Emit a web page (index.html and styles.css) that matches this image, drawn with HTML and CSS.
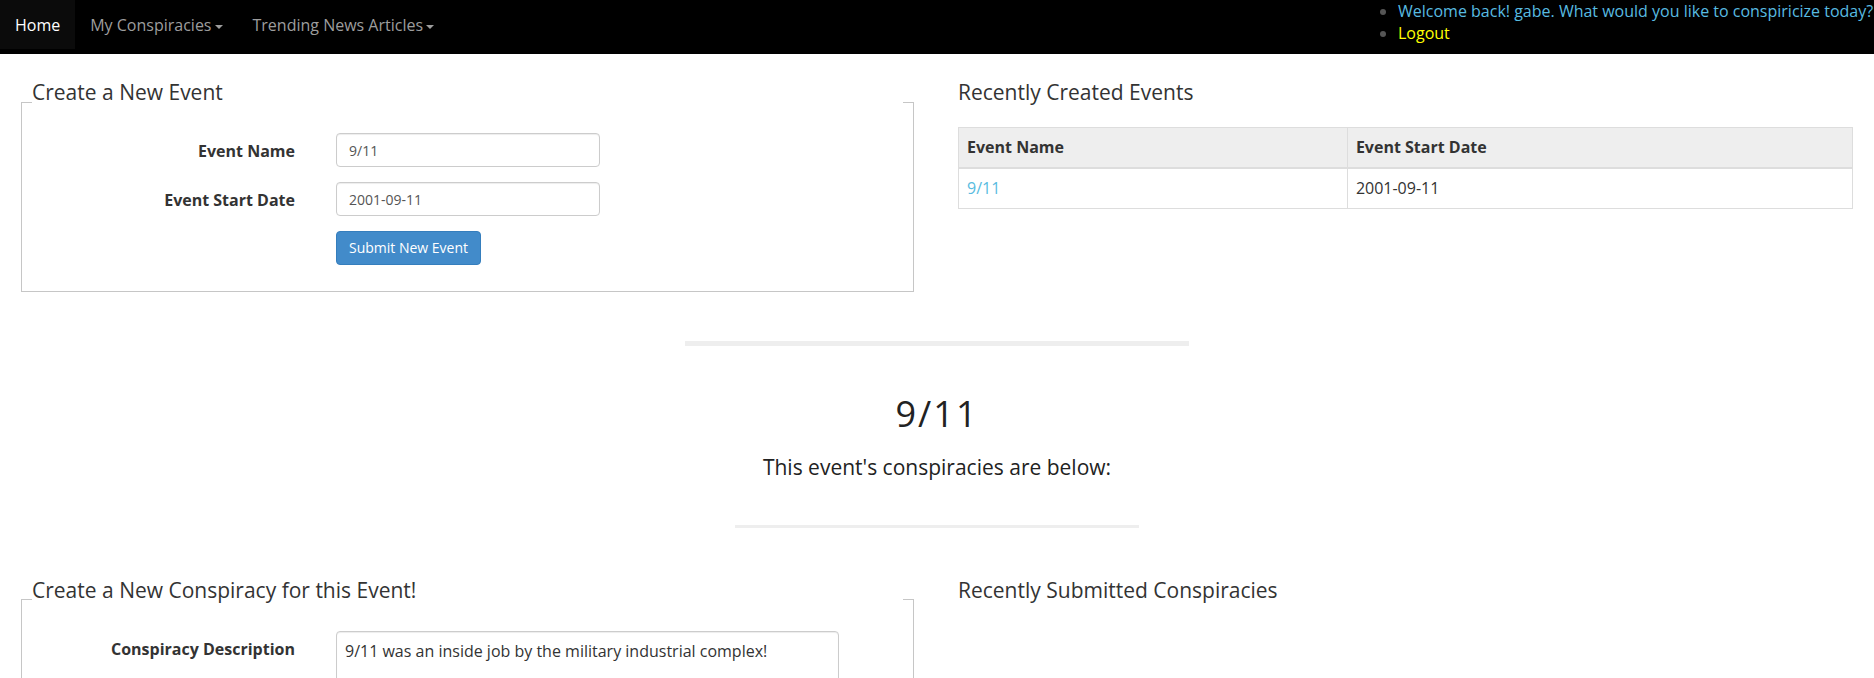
FILE: index.html
```html
<!DOCTYPE html>
<html lang="en">
<head>
<meta charset="utf-8">
<title>Conspiricize</title>
<link rel="stylesheet" href="styles.css">
</head>
<body>
<nav class="navbar">
  <ul class="nav">
    <li class="active"><a href="#">Home</a></li>
    <li><a href="#">My Conspiracies<span class="caret"></span></a></li>
    <li><a href="#">Trending News Articles<span class="caret"></span></a></li>
  </ul>
  <ul class="welcome">
    <li><span class="welcome-text">Welcome back! gabe. What would you like to conspiricize today?</span></li>
    <li><a class="logout" href="#">Logout</a></li>
  </ul>
</nav>

<main class="page">
  <section class="row">
    <fieldset class="box">
      <legend class="box-title">Create a New Event</legend>
      <form class="form form-event">
        <label class="form-label" for="ev-name">Event Name</label>
        <input class="form-control" id="ev-name" type="text" value="9/11">
        <label class="form-label" for="ev-date">Event Start Date</label>
        <input class="form-control" id="ev-date" type="text" value="2001-09-11">
        <span class="form-spacer"></span>
        <div><button class="btn-primary" type="button">Submit New Event</button></div>
      </form>
    </fieldset>
    <div class="side">
      <h2 class="side-title">Recently Created Events</h2>
      <table class="events">
        <colgroup><col class="c1"><col></colgroup>
        <thead>
          <tr><th>Event Name</th><th>Event Start Date</th></tr>
        </thead>
        <tbody>
          <tr><td><a href="#">9/11</a></td><td>2001-09-11</td></tr>
        </tbody>
      </table>
    </div>
  </section>

  <div class="divider divider-wide"></div>
  <h1 class="event-title">9/11</h1>
  <p class="event-sub">This event's conspiracies are below:</p>
  <div class="divider divider-narrow"></div>

  <section class="row row-second">
    <fieldset class="box">
      <legend class="box-title">Create a New Conspiracy for this Event!</legend>
      <form class="form form-consp">
        <label class="form-label" for="consp">Conspiracy Description</label>
        <textarea class="form-area" id="consp" rows="4">9/11 was an inside job by the military industrial complex!</textarea>
      </form>
    </fieldset>
    <div class="side">
      <h2 class="side-title">Recently Submitted Conspiracies</h2>
    </div>
  </section>
</main>
</body>
</html>
```

FILE: styles.css
```css
html {
  overflow: hidden;
}

body {
  margin: 0;
  font-family: "Open Sans", "DejaVu Sans", sans-serif;
  font-size: 16px;
  line-height: 1.42857;
  color: #333;
  background: #fff;
}

/* ---------- navbar ---------- */
.navbar {
  display: flex;
  align-items: flex-start;
  height: 54px;
  background: #000;
  overflow: hidden;
}

.nav {
  display: flex;
  list-style: none;
  margin: 0;
  padding: 0;
}

.nav a {
  display: block;
  padding: 15px 15px 14px;
  line-height: 20px;
  color: #9d9d9d;
  text-decoration: none;
}

.nav .active a {
  color: #fff;
  background: #0b0b0b;
}

.caret {
  display: inline-block;
  width: 0;
  height: 0;
  margin-left: 3px;
  vertical-align: middle;
  border-top: 4px solid #9d9d9d;
  border-left: 4px solid transparent;
  border-right: 4px solid transparent;
}

.welcome {
  flex: none;
  width: 476px;
  margin: 0 0 0 auto;
  padding: 0;
  line-height: 22px;
  white-space: nowrap;
  color: #555;
  list-style: disc outside;
}

.welcome-text {
  color: #58bbe0;
}

.logout {
  color: #ffff00;
  text-decoration: none;
}

/* ---------- page ---------- */
.page {
  padding: 28px 21px 0;
}

.row {
  display: grid;
  grid-template-columns: 893px 895px;
  column-gap: 44px;
  align-items: start;
}

.row-second {
  margin-top: 52px;
}

.box {
  margin: 0;
  min-width: 0;
  border: 1px solid #c6c6c6;
  padding: 0 10px 26px;
}

.box-title {
  width: 100%;
  padding: 0 0 20px;
  margin: 0;
  font-size: 21px;
  line-height: 20px;
  font-weight: 400;
  color: #333;
}

.form {
  display: grid;
  grid-template-columns: 263px 264px;
  column-gap: 41px;
  row-gap: 15px;
  align-items: start;
  margin: 11px 0 0;
}

.form-consp {
  grid-template-columns: 263px 503px;
}

.form-label {
  padding-top: 7px;
  font-weight: 700;
  text-align: right;
}

.form-control {
  box-sizing: border-box;
  display: block;
  width: 100%;
  height: 34px;
  margin: 0;
  padding: 6px 12px;
  font-family: "Open Sans", "DejaVu Sans", sans-serif;
  font-size: 14px;
  line-height: 1.42857;
  color: #555;
  background: #fff;
  border: 1px solid #ccc;
  border-radius: 4px;
  box-shadow: inset 0 1px 1px rgba(0, 0, 0, 0.075);
}

.form-area {
  box-sizing: border-box;
  display: block;
  width: 100%;
  height: 100px;
  margin: 0;
  padding: 8px 8px;
  font-family: "Open Sans", "DejaVu Sans", sans-serif;
  font-size: 16px;
  line-height: 1.42857;
  color: #333;
  background: #fff;
  border: 1px solid #ccc;
  border-radius: 4px;
  box-shadow: inset 0 1px 1px rgba(0, 0, 0, 0.075);
  resize: vertical;
}

.btn-primary {
  display: inline-block;
  margin: 0;
  padding: 6px 12px;
  font-family: "Open Sans", "DejaVu Sans", sans-serif;
  font-size: 14px;
  line-height: 1.42857;
  color: #fff;
  background: #428bca;
  border: 1px solid #357ebd;
  border-radius: 4px;
  cursor: pointer;
}

/* ---------- right column ---------- */
.side-title {
  margin: 0 0 25px;
  font-size: 21px;
  line-height: 20px;
  font-weight: 400;
  color: #333;
}

.events {
  width: 100%;
  border-collapse: collapse;
  border: 1px solid #ddd;
}

.events .c1 {
  width: 43.5%;
}

.events th,
.events td {
  padding: 8px;
  text-align: left;
  border: 1px solid #ddd;
  line-height: 1.42857;
}

.events th {
  background: #eee;
  font-weight: 700;
  border-bottom: 2px solid #ddd;
}

.events a {
  color: #58bbe0;
  text-decoration: none;
}

/* ---------- center ---------- */
.divider {
  margin: 0 auto;
  background: #eee;
}

.divider-wide {
  width: 504px;
  height: 5px;
  margin-top: 49px;
}

.divider-narrow {
  width: 404px;
  height: 3px;
  margin-top: 43px;
}

.event-title {
  margin: 48px 0 0;
  font-size: 36px;
  line-height: 40px;
  font-weight: 400;
  letter-spacing: 2px;
  text-align: center;
  color: #222;
}

.event-sub {
  margin: 18px 0 0;
  font-size: 21px;
  line-height: 30px;
  text-align: center;
  color: #222;
}
```
